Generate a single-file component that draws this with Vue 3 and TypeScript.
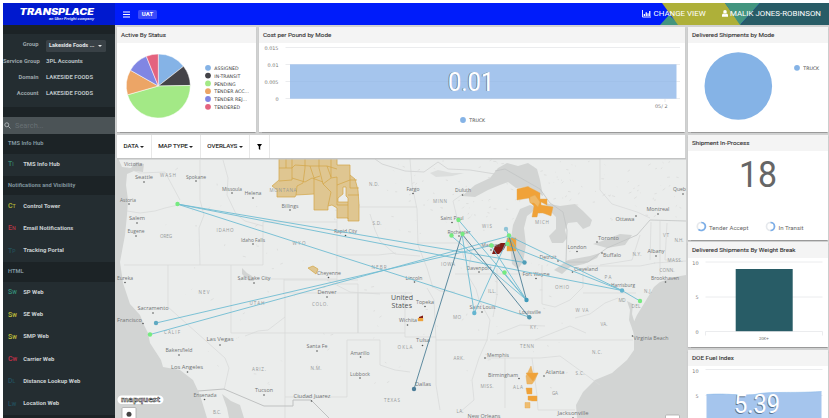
<script setup lang="ts">
interface NavItem { code: string; label: string; color: string }
interface NavGroup { title: string; items: NavItem[] }
interface Slice { label: string; color: string; from: number; to: number }
type Label = [string, number, number, number]

const account = [
  ['Service Group', '3PL Accounts'],
  ['Domain', 'LAKESIDE FOODS'],
  ['Account', 'LAKESIDE FOODS'],
]

const groups: NavGroup[] = [
  { title: 'TMS Info Hub', items: [{ code: 'TI', label: 'TMS Info Hub', color: '#35836f' }] },
  {
    title: 'Notifications and Visibility',
    items: [
      { code: 'CT', label: 'Control Tower', color: '#b5b735' },
      { code: 'EN', label: 'Email Notifications', color: '#b93645' },
      { code: 'TP', label: 'Tracking Portal', color: '#23505a' },
    ],
  },
  {
    title: 'HTML',
    items: [
      { code: 'SW', label: 'SP Web', color: '#35907a' },
      { code: 'SW', label: 'SE Web', color: '#c2c43a' },
      { code: 'SW', label: 'SMP Web', color: '#c2c43a' },
      { code: 'CW', label: 'Carrier Web', color: '#c9304a' },
      { code: 'DL', label: 'Distance Lookup Web', color: '#23505f' },
      { code: 'LW', label: 'Location Web', color: '#23505f' },
    ],
  },
]

const slices: Slice[] = [
  { label: 'ASSIGNED', color: '#85b3e6', from: 0, to: 52 },
  { label: 'IN-TRANSIT', color: '#444348', from: 52, to: 89 },
  { label: 'PENDING', color: '#a3e986', from: 89, to: 254 },
  { label: 'TENDER ACC...', color: '#eca566', from: 254, to: 299.5 },
  { label: 'TENDER REJ...', color: '#8086e3', from: 299.5, to: 338 },
  { label: 'TENDERED', color: '#e4637f', from: 338, to: 360 },
]

function wedge(s: Slice): string {
  const p = (deg: number) => {
    const a = (deg * Math.PI) / 180
    return `${(41.3 + 32 * Math.sin(a)).toFixed(2)} ${(43 - 32 * Math.cos(a)).toFixed(2)}`
  }
  return `M41.3 43 L${p(s.from)} A32 32 0 ${s.to - s.from > 180 ? 1 : 0} 1 ${p(s.to)} Z`
}

// Label entries: text, centre x, centre y, drawn width
const cities: Label[] = [
  ['Victoria', 133, 164, 18], ['Seattle', 144, 177, 18], ['Spokane', 196, 177, 20], ['Missoula', 232, 189, 20],
  ['Helena', 253, 193, 17], ['Billings', 290, 206, 17], ['Astoria', 128, 200, 16], ['Salem', 137, 218, 16],
  ['Eugene', 136, 231, 17], ['Idaho Falls', 253, 240, 24], ['Eureka', 125, 278, 16], ['Salt Lake City', 254, 278, 33],
  ['Fargo', 413, 189, 13], ['Duluth', 463, 190, 16], ['Saint Paul', 452, 218, 23], ['Rapid City', 345.5, 231, 23],
  ['Rochester', 459, 232, 23], ['Madison', 491, 245, 19], ['Davenport', 479, 268, 25], ['Cheyenne', 329, 273, 24],
  ['Lincoln', 414, 278, 17], ['Quebec', 682, 189, 18], ['Montreal', 658, 209, 23], ['Ottawa', 625, 219, 19],
  ['Toronto', 608.5, 238, 21], ['London', 577, 247, 19], ['Buffalo', 612, 255, 18], ['Albany', 656, 251, 17],
  ['Detroit', 548, 257, 17], ['Cleveland', 586, 269, 24], ['Fort Wayne', 536, 274, 27], ['Brookhaven', 665, 278, 28],
  ['Harrisburg', 623, 285, 24], ['Sacramento', 153, 308, 31], ['Francisco', 129.5, 320, 25], ['Denver', 327, 292, 19],
  ['Las Vegas', 220, 339, 27], ['Bakersfield', 179, 350, 27], ['Los Angeles', 187, 367, 32], ['Santa Fe', 317, 346, 21],
  ['Amarillo', 360, 353, 19], ['Lubbock', 360, 374, 20], ['Tucson', 264, 390, 18], ['Ensenada', 205, 395, 23],
  ['Ciudad Juarez', 312, 396, 37], ['Topeka', 425, 302, 18], ['Saint Louis', 482.5, 307, 26], ['Louisville', 530, 312, 22],
  ['Wichita', 408, 320, 18], ['Virginia Beach', 651, 338, 35], ['Tulsa', 423, 340, 14], ['Memphis', 498, 355, 22],
  ['Birmingham', 503, 375, 30], ['Atlanta', 555, 372, 19], ['Dallas', 423, 384, 16], ['New Orleans', 484, 416.5, 33],
  ['Jacksonville', 573, 413, 31],
]

const states: Label[] = [
  ['WASH', 168, 175, 16], ['MONTANA', 283, 190, 27], ['OREG', 166, 236, 12], ['IDAHO', 225, 230, 17], ['WYO', 299, 243, 13],
  ['N.D.', 374, 184, 10], ['MINN', 440, 201, 14], ['S.D.', 377, 223, 9], ['WIS', 487, 226, 10], ['NEBR', 379, 267, 15],
  ['IOWA', 448, 264, 14], ['MICH', 542, 222, 14], ['VT', 666, 235, 6], ['N.H.', 679, 240, 9], ['N.Y.', 637, 254, 9],
  ['MASS.', 675, 260, 15], ['CONN.', 667, 270, 15], ['PA', 608, 277, 7], ['NEV', 204, 292, 11], ['CALIF', 172, 332, 16],
  ['UTAH', 257, 303, 15], ['COLO.', 320, 304, 16], ['ARIZ.', 259, 369, 14], ['N.M.', 316, 368, 11], ['TEXAS', 392, 400, 16],
  ['B.C.', 217, 412, 8], ['ILL.', 492, 291, 8], ['OHIO', 562, 287, 14], ['MO', 457, 317, 8], ['KY.', 534, 327, 8],
  ['W VA', 582, 310, 13], ['VA.', 604, 324, 7], ['MD', 622, 300, 7], ['DEL', 636, 306, 9], ['N.J.', 648, 291, 8],
  ['OKLA', 405, 347, 15], ['TENN', 527, 346, 14], ['N.C.', 597, 352, 10], ['ARK.', 459, 358, 11], ['S.C.', 580, 373, 9],
  ['MISS.', 487, 386, 13], ['ALA', 518, 387, 10], ['GA', 555, 393, 6], ['LA.', 460, 411, 7],
]

const dots: [number, number][] = [
  [144, 182], [196, 181], [232, 193], [253, 198], [290, 210], [129, 204], [137, 223], [136, 236], [253, 244], [125, 282.5],
  [254, 283], [413, 193.5], [462.5, 195], [452, 222.5], [345.5, 235.5], [459, 236], [491, 250], [479, 272], [328.5, 277.5],
  [414.5, 282], [683, 194], [658, 214], [636, 216], [597, 242], [577, 251.5], [602, 253], [656, 256], [558, 261],
  [572.5, 272], [536, 278.5], [665.5, 282], [153, 313], [143, 323.5], [327, 297], [220, 345], [179, 355], [187.5, 372],
  [317, 351], [360.5, 357], [360, 378], [264, 395], [204.5, 399.5], [311.5, 401], [425, 306.5], [482, 312], [407.5, 325],
  [632.5, 336], [422.5, 345.5], [485, 358], [519, 378.5], [544, 376], [573, 418],
]

const lanes: [number, number, number, number][] = [
  [177, 204, 524.5, 262.5], [177, 204, 622, 290.5], [177, 204, 529, 317], [156, 323, 491, 245.5], [150, 334.5, 509, 236],
  [458.5, 220, 526.5, 300], [462, 234, 474.3, 313], [451, 235.5, 526.5, 300], [509, 236, 524.5, 262.5],
  [509, 236, 622, 290.5], [509, 236, 474.3, 313], [507, 245, 622, 290.5], [504, 272.5, 526.5, 300], [491, 245.5, 526.5, 300],
  [622, 290.5, 640, 301], [506, 229, 509, 236],
]
const darkLanes: [number, number, number, number][] = [
  [462, 234, 414, 389], [462, 234, 529, 317], [509, 236, 526.5, 300],
]
const origins: [number, number][] = [
  [177.5, 204], [150, 334.5], [458.5, 220], [462.5, 234], [451.5, 235.5], [491.5, 245.5], [509, 235.5], [507.5, 244], [504.5, 272.5], [640, 301],
]
const stops: [number, number, string][] = [
  [156, 323, '#5fa9c1'], [524.5, 262.5, '#4f9db7'], [526.5, 300, '#3f9aba'], [529.3, 317.2, '#5096ae'], [474.3, 313, '#64b5d0'],
  [622, 290.5, '#64b5d0'], [414, 389, '#4c7d98'], [506, 229, '#8fc4d7'],
]

// Small lakes and terrain marks scattered over land, in fixed pseudo-random order
const specks = Array.from({ length: 260 }, (_, i) => {
  const r = (n: number) => { const v = Math.sin(i * 12.9898 + n * 78.233) * 43758.5453; return v - Math.floor(v) }
  const north = i < 150
  const x = north ? 390 + r(1) * 290 : 165 + r(1) * 410
  const y = north ? 160 + r(2) * 62 : 168 + r(2) * 220
  return `M${x.toFixed(1)} ${y.toFixed(1)}l${(r(3) * 4 - 1).toFixed(1)} ${(r(4) * 3 - 2).toFixed(1)}`
}).join('')
</script>

<template>
  <div class="page">
    <aside class="side">
      <div class="brand">
        <svg width="112" height="22" viewBox="3 3 112 22">
          <text class="logo" x="19.5" y="14.8" textLength="74.5" lengthAdjust="spacingAndGlyphs">TRANSPLACE</text>
          <text class="tag" x="49" y="19.6" textLength="45" lengthAdjust="spacingAndGlyphs">an Uber Freight company</text>
        </svg>
      </div>
      <div class="account">
        <div class="field">
          <span class="key">Group</span>
          <span class="select">Lakeside Foods ...<i></i></span>
        </div>
        <div v-for="row in account" :key="row[0]" class="field">
          <span class="key">{{ row[0] }}</span><span>{{ row[1] }}</span>
        </div>
      </div>
      <div class="search">
        <svg width="7" height="7" viewBox="0 0 7 7"><circle cx="2.8" cy="2.8" r="2" /><path d="M4.3 4.3 6.4 6.4" /></svg>
        <span>Search...</span>
      </div>
      <nav>
        <template v-for="g in groups" :key="g.title">
          <h3>{{ g.title }}</h3>
          <div class="items">
            <div v-for="it in g.items" :key="it.label" class="item">
              <span class="code" :style="{ color: it.color }">{{ it.code[0] }}<small>{{ it.code[1] }}</small></span>
              <span>{{ it.label }}</span>
            </div>
          </div>
        </template>
      </nav>
    </aside>

    <div class="body">
      <header class="top">
        <svg class="shards" width="200" height="22" viewBox="629 3 200 22">
          <path fill="#43957f" d="M660 25 669 15 680 25Z" />
          <path fill="#aeb039" d="M662 3H725L741 25H678Z" />
          <path fill="#43957f" d="M725 3H760L740 25Z" />
          <path fill="#285c66" d="M760 3H829V25H740Z" />
        </svg>
        <div class="bar">
          <svg class="burger" width="7" height="7" viewBox="0 0 7 7"><path d="M0 1H7M0 3.5H7M0 6H7" /></svg>
          <span class="badge">UAT</span>
          <span class="link view">
            <svg width="9" height="8" viewBox="0 0 9 8"><path d="M.5 0V7H9" fill="none" stroke="#fff" stroke-width=".9" /><path d="M1.7 4H3V6H1.7ZM3.6 2.3H4.9V6H3.6ZM5.4 3.3H6.6V6H5.4ZM7.1 1H8.4V6H7.1Z" /></svg>
            CHANGE VIEW
          </span>
          <span class="link">
            <svg width="6" height="7" viewBox="0 0 6 7"><circle cx="3" cy="1.9" r="1.8" /><path d="M0 6.8V5Q.2 3.7 1.3 3.6 3 4.7 4.7 3.6 5.8 3.7 6 5V6.8Z" /></svg>
            MALIK JONES-ROBINSON
          </span>
        </div>
      </header>

      <div class="work">
        <main class="main">
          <div class="cards">
            <section class="card status">
              <h2>Active By Status</h2>
              <svg width="139" height="89" viewBox="0 0 139 89">
                <g stroke="#fff" stroke-width=".5"><path v-for="s in slices" :key="s.label" :d="wedge(s)" :fill="s.color" /></g>
                <g v-for="(s, i) in slices" :key="s.color">
                  <circle cx="91" :cy="24.8 + i * 7.8" r="2.9" :fill="s.color" />
                  <text class="legend" x="97.3" :y="27 + i * 7.8">{{ s.label }}</text>
                </g>
              </svg>
            </section>
            <section class="card cost">
              <h2>Cost per Pound by Mode</h2>
              <svg width="426" height="89" viewBox="259 43 426 89">
                <path class="grid" d="M285.5 47.5H680M285.5 64.5H680M285.5 81.5H680M285.5 98.5H680M665 98.5V102" />
                <rect x="290" y="64.3" width="386.5" height="34.4" fill="#a5c5ed" />
                <path d="M290 81.5H676" stroke="#9dbde6" stroke-width=".6" />
                <g class="axis" text-anchor="end">
                  <text x="278.5" y="50">0.015</text><text x="278.5" y="67">0.01</text>
                  <text x="278.5" y="84">0.005</text><text x="278.5" y="101">0</text>
                  <text x="667.5" y="107.5">05/ 2</text>
                </g>
                <text class="big shade" x="447.300" y="91.200" textLength="46" lengthAdjust="spacingAndGlyphs" aria-hidden="true">0.01</text>
                <text class="big" x="448" y="90.5" textLength="46" lengthAdjust="spacingAndGlyphs">0.01</text>
                <circle cx="463" cy="120" r="2.9" fill="#85b3e6" /><text class="legend" x="469.3" y="122.2">TRUCK</text>
              </svg>
            </section>
          </div>
          <div class="tools">
            <span>DATA<i></i></span><span>MAP TYPE<i></i></span><span>OVERLAYS<i></i></span>
            <span class="filter"><svg width="5" height="6" viewBox="0 0 5 6"><path d="M0 0H5L3.2 2.5V6L1.8 5V2.5Z" /></svg></span>
          </div>
          <svg class="map" width="571" height="260" viewBox="115 158 571 260">
            <rect x="115" y="158" width="571" height="260" fill="#ebedec" />
            <g fill="none" stroke="#dcdedd" stroke-width=".9"><path :d="specks" /></g>
            <g fill="#d2d4d3">
              <path d="M115 158H118L122 167 131 168 136 162 144 164 143 172 134 171 127 174 126 185 128 200 127 215 125 235 120 262 123 283 130 304 140 315 144 325 148 333 150 343 161 360 163 367 180 370 193 380 200 395 207 418H115Z" />
              <path d="M222 394 227 408 229 418H244L240 405 231 401Z" />
              <path d="M686 275 675 277 660 282 654 287 645 302 637 315 632 326 634 336 634 350 627 360 612 373 595 380 583 392 576 405 577 418H686Z" />
              <path d="M627 301 630 310 629 320 633 331 635 324 632 314 633 304Z" />
              <path d="M462 196 475 185 490 178 498 168 507 163 518 166 528 163 537 169 540 180 543 196 530 187 516 188 508 182 500 185 488 190 475 197Z" />
              <path d="M520 209 530 205 537 207 531 213 527 216 524 228 526 245 523 262 518 269 512 264 510 245 513 225Z" />
              <path d="M545 203 560 206 575 204 583 211 592 220 590 226 583 229 577 222 568 223 565 230 567 238 563 243 552 243 549 236 556 229 556 217 550 211Z" />
              <path d="M554 270 568 260 590 256 600 253 597 258 584 264 570 267 562 274Z" />
              <path d="M593 244 602 241 620 234 632 235 625 245 607 248Z" />
              <path d="M242 268 247 273 252 276 254 281 249 281 242 274Z" />
              <path d="M430 173 438 170 452 173 464 173 452 176 436 177Z" opacity=".6" />
            </g>
            <g class="border">
              <path d="M200 160V200L204 215 199 228 200 265M124 265H263V222M223 160 228 178 227 195 236 214 245 221 263 226M263 222H337M263 279H337M284 279V295M168 265V307L225 358 229 368 224 390M231 265V333M285 295V418M231 333H405M337 159V284H358V333M284 280H358M285 293H412M337 207H417M410 159 412 185 417 209 418 245 427 268 433 288M337 255H378L396 253M417 243H460L464 258M430 285 440 291 455 292M347 340V397H285M347 340H380V365L395 370 410 372M358 293V333" />
              <path d="M405 294V337H436M436 340V385L440 410M436 340H488M427 288 434 300 436 340M455 274H530M467 274 476 289 479 300 490 320 487 340 479 358 472 380 474 400 460 412M490 340H633M484 358H540L560 356 600 385M505 358V408M532 358 537 395 538 410H575M497 268V295L493 317M542 265V304M542 304 555 307 570 300 583 287 583 270M583 270 588 266H640L655 263M583 293H636M575 318 590 314 605 303 618 298M535 340 555 332 570 326 586 333M497 334 520 325 545 326" />
              <path d="M650 260 651 222M667 223 665 260 680 260M654 263 686 261M660 221V275M127 211 140 213 155 211 165 208 178 205M540 159 600 159 600 190 612 204 637 212 650 218M600 265 632 260 640 235" />
              <path d="M127 168 140 173 165 172 173 187 180 200M370 214 375 230 380 241 395 254 420 256M327 280 350 292 380 294M285 317 268 330 258 331 245 336M464 193 453 201 460 230 472 252 468 270" />
            </g>
            <path d="M495 171 505 169 540 189 550 203 563 212 567 230 566 262 588 262 607 248 637 235 650 220 686 221" fill="none" stroke="#c2c4c4" stroke-width=".8" />
            <path d="M198 391 224 389 264 406H293V400H311L329 418" fill="none" stroke="#bfc1c1" stroke-width="1" />
            <path d="M375 159 382 164 405 171 424 172 438 162 448 169 470 170 495 174" fill="none" stroke="#cfd1d0" stroke-width=".8" />

            <g fill="#dfc691" stroke="#d3a545" stroke-width=".7">
              <path fill-rule="evenodd" d="M279 158H337V165H350V175L355 179 358 190 359 205V221H348V218H337V208L332 205 328 206V210H314V194L296 195 295 197H277V190L272 186 279 180ZM343 187H346V196L348 198V202H338V198L343 194Z" />
              <path d="M279 168H292L295 165 310 166H327L337 169M292 158V180L279 181M305 158V168L303 183 297 186 296 195M292 178 305 182 312 178 323 182M319 158V168L323 184 331 192 328 206M314 194V178L320 176M331 159V178L323 184M331 178 337 177V205M337 185 350 180 357 180M350 175V188H359M348 202V219M337 205H348M348 195H359M310 166 314 178M286 158V168M327 166 331 177" fill="none" />
              <path d="M308 268 313 266 318 269 316 274 312 271Z" />
            </g>
            <g fill="#f0a238" stroke="#e4a64b" stroke-width=".4">
              <path d="M517 189 528 186.5 540 193V199L547 199V205L541 202V205L553 207 551 216 543 213 538 213 537 217H532L534 206 530 202 529 198 517 200Z" />
              <path d="M530 197 535 195 540 202 538 207 534 203H530Z" fill="#efb866" />
              <path d="M507 238H516V251H507Z" />
              <path d="M531 366 533 374 538 373 535 380 532 384H527L526 376Z" fill="#edb666" />
              <path d="M526 373H538L533 381Z" /><path d="M526 388H532V394H527ZM528 396H537V401H532L528 400Z" />
              <path d="M525 402.5H530V408H525Z" fill="#efbd70" /><path d="M418 318H423V321H418Z" />
            </g>
            <g fill="#811b16"><path d="M492 254 495 246 501 243 507 243 504 249 499 254Z" /><path d="M419 317 423 315.5V318H419Z" /></g>

            <text v-for="(s, i) in states" :key="'s' + i" class="state" :x="s[1] - s[3] / 2" :y="s[2] + 1.7" :textLength="s[3]">{{ s[0] }}</text>
            <g fill="#4e5051"><circle v-for="(d, i) in dots" :key="i" :cx="d[0]" :cy="d[1]" r=".8" /></g>
            <text v-for="c in cities" :key="c[0]" class="city" :x="c[1] - c[3] / 2" :y="c[2] + 1.8" :textLength="c[3]" lengthAdjust="spacingAndGlyphs">{{ c[0] }}</text>
            <text class="country" x="391" y="299.5" textLength="22">United</text>
            <text class="country" x="391.5" y="307.5" textLength="20.5">States</text>

            <g stroke="#6fbcd3" stroke-width=".9"><line v-for="(l, i) in lanes" :key="i" :x1="l[0]" :y1="l[1]" :x2="l[2]" :y2="l[3]" /></g>
            <g stroke="#4d7f96" stroke-width=".9"><line v-for="(l, i) in darkLanes" :key="i" :x1="l[0]" :y1="l[1]" :x2="l[2]" :y2="l[3]" /></g>
            <circle v-for="(o, i) in origins" :key="'o' + i" :cx="o[0]" :cy="o[1]" r="2.2" fill="#75ea80" />
            <circle v-for="(o, i) in stops" :key="'d' + i" :cx="o[0]" :cy="o[1]" r="2.2" :fill="o[2]" />

            <path d="M117 158.7H686" stroke="#c2c3c3" stroke-width="1.6" />
            <rect x="117.5" y="395.5" width="46" height="8.500" rx="4.200" fill="#fff" />
            <text class="mapquest" x="121" y="401.700" textLength="39" lengthAdjust="spacingAndGlyphs">mapquest</text>
            <rect x="122" y="407.5" width="14" height="13" rx="1" fill="#fff" stroke="#aaa" stroke-width=".8" />
            <circle cx="129" cy="414.3" r="2.5" fill="#444" />
            <rect x="665.5" y="415" width="14" height="8" rx="1" fill="#fff" stroke="#aaa" stroke-width=".8" />
          </svg>
        </main>

        <aside class="right">
          <section class="card">
            <h2>Delivered Shipments by Mode</h2>
            <svg width="140" height="89" viewBox="688 43 140 89">
              <circle cx="738.3" cy="86" r="33.8" fill="#85b3e6" />
              <circle cx="797" cy="67.8" r="2.9" fill="#85b3e6" /><text class="legend" x="803.3" y="70">TRUCK</text>
            </svg>
          </section>
          <section class="card">
            <h2>Shipment In-Process</h2>
            <svg width="140" height="89" viewBox="688 151 140 89">
              <text class="count" x="739" y="186.5" textLength="38" lengthAdjust="spacingAndGlyphs">18</text>
              <g fill="none" stroke-width="1.7">
                <g stroke="#e6e9ed"><circle cx="701.3" cy="226.500" r="4" /><circle cx="770.5" cy="226.500" r="4" /></g>
                <path stroke="#7baee8" d="M701.3 222.5A4 4 0 1 1 698.5 229.3M770.5 222.5A4 4 0 0 1 770.5 230.5" />
              </g>
              <text class="note" x="709" y="229.7" textLength="39.5">Tender Accept</text>
              <text class="note" x="778.5" y="229.7" textLength="25">In Transit</text>
            </svg>
          </section>
          <section class="card">
            <h2>Delivered Shipments By Weight Break</h2>
            <svg width="140" height="89" viewBox="688 258.5 140 89">
              <path class="grid" d="M705.5 262.5H822.5M705.5 297.5H822.5M705.5 336V332H822.5V336" />
              <rect x="735.7" y="269.5" width="57" height="62.2" fill="#285c66" />
              <g class="axis" text-anchor="end"><text x="698.5" y="265">10</text><text x="698.5" y="299.5">5</text><text x="698.5" y="334">0</text></g>
              <text class="tiny" x="759" y="340.5" textLength="10">20K+</text>
            </svg>
          </section>
          <section class="card last">
            <h2>DOE Fuel Index</h2>
            <svg width="140" height="53" viewBox="688 366 140 53">
              <path class="grid" d="M705.5 369.5H822.5M705.5 395.5H822.5" />
              <path fill="#a5c5ed" d="M706.5 394.5C730 393 735 396 755 394.5 770 391 790 393.5 821.5 391.5V419H706.5Z" />
              <path fill="none" stroke="#8ab8e8" stroke-width=".6" d="M706.5 394.5C730 393 735 396 755 394.5 770 391 790 393.5 821.5 391.5" />
              <g class="axis" text-anchor="end"><text x="698.5" y="372.5">10</text><text x="698.5" y="398">5</text></g>
              <text class="big shade" x="733.3" y="413.700" textLength="46" lengthAdjust="spacingAndGlyphs" aria-hidden="true">5.39</text>
              <text class="big" x="734" y="413" textLength="46" lengthAdjust="spacingAndGlyphs">5.39</text>
            </svg>
          </section>
        </aside>
      </div>
    </div>
  </div>
</template>

<style>
body { background: #fff; overflow: hidden; }
</style>

<style scoped>
.page { box-sizing: border-box; width: 829px; height: 418px; padding: 3px 0 0 3px; display: flex; overflow: hidden; font-family: Roboto, "Liberation Sans", sans-serif; font-size: 6px; line-height: 1; }
svg { display: block; flex: none; }
h2, h3 { margin: 0; }
.side { width: 112px; height: 415px; flex: none; overflow: hidden; background: #1c2326; color: #b9c0c3; font-weight: 700; }
.brand { height: 22px; background: #0019cf; }
.logo { font: italic 900 8.3px Inter, "Liberation Sans", sans-serif; fill: #fff; }
.tag { font: italic 700 4px "Liberation Sans", sans-serif; fill: #e6e9ff; }
.account { height: 73px; margin-top: 9px; background: #242d31; box-sizing: border-box; padding-top: 3px; }
.field { height: 16px; display: flex; align-items: center; white-space: nowrap; font-size: 5.9px; }
.field:first-child { height: 17px; }
.key { box-sizing: border-box; width: 43px; padding-right: 7.5px; flex: none; display: flex; justify-content: safe flex-end; color: #9da6aa; font-size: 5.8px; }
.field:first-child .key { margin-bottom: 2px; }
.select { box-sizing: border-box; width: 60px; height: 12px; padding: 0 4px 0 3px; border-radius: 1.5px; background: #394146; color: #e4e7e8; display: flex; align-items: center; justify-content: space-between; font-size: 5.6px; }
i { display: inline-block; border: 2px solid transparent; border-top-color: currentColor; border-bottom: 0; }
.search { height: 17px; margin-top: 10px; display: flex; align-items: center; gap: 4px; padding-left: 1px; background: #4b5356; color: #687074; font-size: 7.4px; font-weight: 400; }
.search svg { fill: none; stroke: #a7adb0; stroke-width: 1; }
h3 { height: 19.6px; padding-left: 5px; display: flex; align-items: center; color: #80959e; font-size: 5.7px; font-weight: 700; }
.items { background: #242d31; }
.item { height: 22.25px; display: flex; align-items: center; padding-left: 5px; color: #cbd1d3; font-size: 5.9px; }
.code { width: 15.2px; font-size: 7px; font-weight: 500; }
.code small { font-size: 5.2px; }
.body { flex: 1; min-width: 0; }
.top { display: grid; height: 22px; background: #001cfa; }
.shards { grid-area: 1 / 1; justify-self: end; }
.bar { grid-area: 1 / 1; display: flex; align-items: center; padding: 0 8px 0 7.5px; color: #fff; z-index: 1; }
.burger { stroke: #fff; stroke-width: 1.2; }
.badge { margin-left: 8.5px; width: 19px; height: 9px; border-radius: 1.5px; background: #3b4af9; display: flex; align-items: center; justify-content: center; font-size: 6px; font-weight: 700; }
.link { display: flex; align-items: center; gap: 2.2px; font-size: 7.92px; white-space: nowrap; }
.link svg { fill: #fff; }
.view { margin-left: auto; margin-right: 16px; }
.work { display: flex; gap: 2px; height: 393px; background: #d1d2d2; }
.main { width: 571px; flex: none; padding-top: 2px; }
.cards { display: flex; gap: 3px; padding-left: 2px; }
.card { height: 105px; background: #fff; box-shadow: 0 .5px 1px #999; overflow: hidden; }
.status { width: 139px; }
.cost { width: 426px; }
h2 { height: 16px; box-sizing: border-box; padding-left: 4px; display: flex; align-items: center; background: #f4f4f4; color: #383838; font-size: 6.25px; font-weight: 400; -webkit-text-stroke: .12px #383838; white-space: nowrap; }
.tools { margin: 3px 1px 0 2px; height: 23px; display: flex; background: #fff; color: #222; font-size: 6.2px; font-weight: 400; -webkit-text-stroke: .15px #222; }
.tools span { display: flex; align-items: center; gap: 1.5px; padding: 0 6.5px; border-right: 1px solid #e8e8e8; white-space: nowrap; }
.tools .filter { width: 5px; padding: 0 7px; }
.right { width: 140px; flex: none; padding-top: 2px; display: flex; flex-direction: column; gap: 2.7px; }
.right .card { flex: none; }
.legend { font: 4.7px "DejaVu Sans", sans-serif; fill: #444; }
.axis text { font: 4.9px "DejaVu Sans", sans-serif; fill: #777; }
.grid { fill: none; stroke: #e6e7ea; stroke-width: .8; }
.big { font: 400 25px Roboto, sans-serif; fill: #fff; }
.shade { fill: #5b7490; }
.count { font: 400 36px Roboto, sans-serif; fill: #666; }
.note { font: 6px Roboto, sans-serif; fill: #666; }
.tiny { font: 4px "DejaVu Sans", sans-serif; fill: #777; }
.border { fill: none; stroke: #d7d9d8; stroke-width: .7; }
.state { font: 4.6px "Open Sans", sans-serif; fill: #96999a; }
.city { font: 5.6px "Open Sans", sans-serif; fill: #707374; }
.country { font: 7px "Open Sans", sans-serif; fill: #505354; }
.mapquest { font: 700 7px "Open Sans", sans-serif; fill: #fff; stroke: #333; stroke-width: .5; }
</style>
